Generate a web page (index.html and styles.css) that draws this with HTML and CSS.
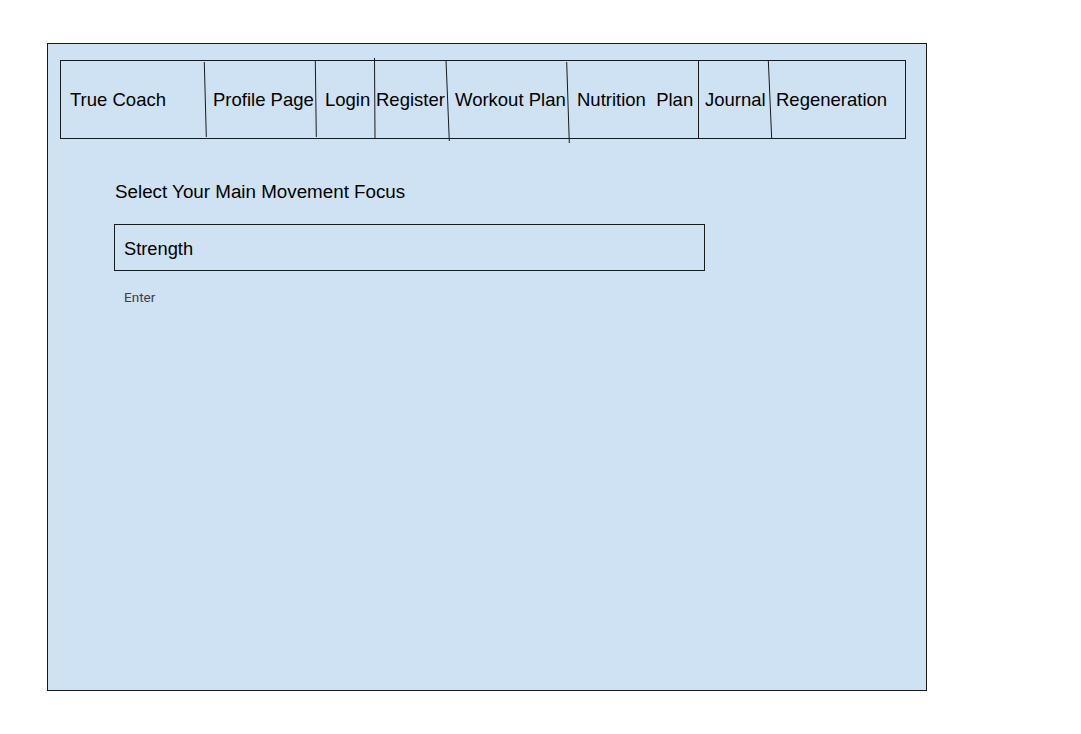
FILE: index.html
```html
<!DOCTYPE html>
<html>
<head>
<meta charset="utf-8">
<link rel="stylesheet" href="styles.css">
</head>
<body>
<div class="frame">
  <nav class="nav">
    <span class="nav-item">True Coach</span>
    <span class="nav-item">Profile Page</span>
    <span class="nav-item">Login</span>
    <span class="nav-item">Register</span>
    <span class="nav-item">Workout Plan</span>
    <span class="nav-item">Nutrition&nbsp; Plan</span>
    <span class="nav-item">Journal</span>
    <span class="nav-item">Regeneration</span>
    <svg class="dividers" width="846" height="90" viewBox="0 0 846 90">
      <g stroke="#1a1a1a" stroke-width="1" fill="none">
        <line x1="144.3" y1="2" x2="146.3" y2="77"/>
        <line x1="255.3" y1="0" x2="256.3" y2="77"/>
        <line x1="314.5" y1="-2" x2="315" y2="78"/>
        <line x1="386" y1="0" x2="389.3" y2="81"/>
        <line x1="506.7" y1="2" x2="509.3" y2="83"/>
        <line x1="638.5" y1="0" x2="638.5" y2="78"/>
        <line x1="708.3" y1="0" x2="711.7" y2="79"/>
      </g>
    </svg>
  </nav>
  <section class="content">
    <h2 class="title">Select Your Main Movement Focus</h2>
    <div class="field">Strength</div>
    <div class="hint">Enter</div>
  </section>
</div>
</body>
</html>
```

FILE: styles.css
```css
html, body {
  margin: 0;
  padding: 0;
  background: #ffffff;
}

body {
  font-family: "Liberation Sans", Arial, sans-serif;
  color: #000;
}

.frame {
  box-sizing: border-box;
  margin: 43px 0 0 47px;
  width: 880px;
  height: 648px;
  border: 1px solid #1a1a1a;
  background: #cfe2f3;
  padding: 16px 0 0 12px;
}

.nav {
  position: relative;
  box-sizing: border-box;
  width: 846px;
  height: 79px;
  border: 1px solid #1a1a1a;
  display: grid;
  grid-template-columns: 143px 111px 60px 71px 121px 131px 71px 1fr;
  align-items: center;
  font-size: 18.5px;
  line-height: 21px;
  white-space: nowrap;
}

.nav-item {
  padding-left: 9px;
  margin-top: 0;
}
.nav-item:nth-child(1) { padding-left: 9px; }
.nav-item:nth-child(2) { padding-left: 9px; }
.nav-item:nth-child(3) { padding-left: 10px; }
.nav-item:nth-child(4) { padding-left: 1px; }
.nav-item:nth-child(5) { padding-left: 9px; }
.nav-item:nth-child(6) { padding-left: 10px; }
.nav-item:nth-child(7) { padding-left: 7px; }
.nav-item:nth-child(8) { padding-left: 7px; }

.dividers {
  position: absolute;
  left: -1px;
  top: -1px;
  overflow: visible;
  pointer-events: none;
}

.content {
  margin: 42px 0 0 54px;
}

.title {
  margin: 0 0 22px 1px;
  font-size: 18.8px;
  line-height: 21px;
  font-weight: normal;
}

.field {
  box-sizing: border-box;
  width: 591px;
  height: 47px;
  border: 1px solid #1a1a1a;
  padding-left: 9px;
  font-size: 18.3px;
  line-height: 47px;
}

.hint {
  margin: 19px 0 0 10px;
  font-family: Roboto, "Liberation Sans", sans-serif;
  font-size: 13.5px;
  line-height: 15px;
  color: #3c4043;
}
```
